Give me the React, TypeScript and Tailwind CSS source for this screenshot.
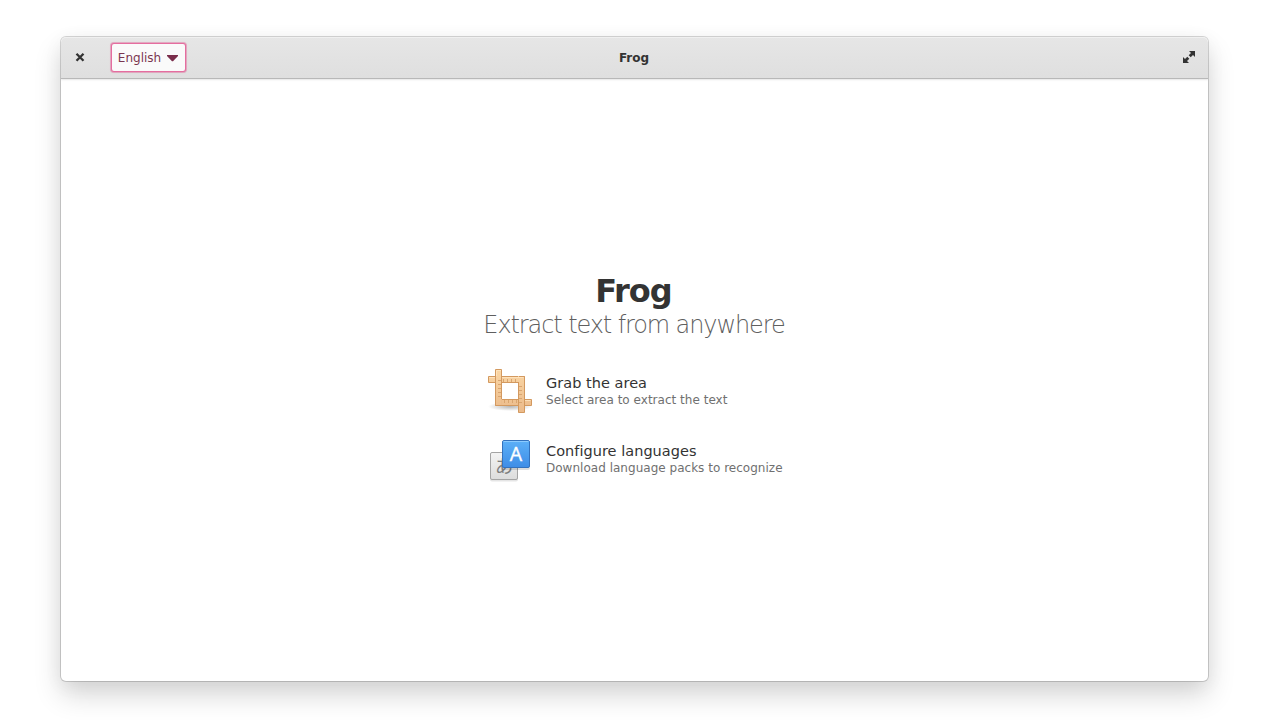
import type { ReactNode } from "react";

function CloseIcon() {
  return (
    <svg width="16" height="16" viewBox="0 0 16 16" fill="none">
      <path d="M4.500 3.700l7 7M11.500 3.700l-7 7" stroke="#333" strokeWidth="2.3" />
    </svg>
  );
}

function ExpandIcon() {
  return (
    <svg width="16" height="16" viewBox="0 0 16 16" fill="#333">
      <path d="M8 1H14V7L12 5L9.700 7.300L7.700 5.300L10 3Z" />
      <path d="M8 13H2V7L4 9L6.300 6.700L8.300 8.700L6 11Z" />
    </svg>
  );
}

function CropIcon() {
  return (
    <svg width="48" height="48" viewBox="0 0 48 48" fill="none" className="shrink-0">
      <defs>
        <linearGradient id="wood" x1="0" y1="2" x2="0" y2="46" gradientUnits="userSpaceOnUse">
          <stop offset="0" stopColor="#fbd7a5" />
          <stop offset="1" stopColor="#ebba8a" />
        </linearGradient>
        <radialGradient id="ground">
          <stop offset="0" stopColor="#000" stopOpacity=".28" />
          <stop offset="1" stopColor="#000" stopOpacity="0" />
        </radialGradient>
      </defs>
      <ellipse cx="24" cy="39.500" rx="22" ry="4.500" fill="url(#ground)" />
      <path d="M16 16h16v16H16z" fill="#fff" />
      <g fill="url(#wood)" stroke="#d3995f">
        <path d="M2.500 9.500h36v6h-36z" />
        <path d="M9.500 32.500h36v6h-36z" />
        <path d="M9.500 2.500h6v36h-6z" />
        <path d="M32.500 9.500h6v36h-6z" />
      </g>
      <path d="M15 32.500h1M15.500 33v5" stroke="#ecbd8d" />
      <path d="M33 9.500h-1M32.500 10v5" stroke="#f7cf9e" />
      <path d="M10.500 9V3.500H15M3 10.500h6M16 10.500h21.500M39 33.500h5.500" stroke="#ffe6c2" strokeOpacity=".8" />
      <path
        d="M12 13.500h3M12 17.500h3M12 21.500h3M12 25.500h3M12 29.500h3M17.500 12v3M21.500 12v3M25.500 12v3M29.500 12v3M33 19.500h3M33 23.500h3M33 27.500h3M33 31.500h3M33 35.500h3M18.500 33v3M22.500 33v3M26.500 33v3M30.500 33v3"
        stroke="#d9a570"
      />
    </svg>
  );
}

function LanguageIcon() {
  return (
    <svg width="48" height="48" viewBox="0 0 48 48" className="shrink-0">
      <defs>
        <linearGradient id="blue" x1="0" y1="0" x2="0" y2="1">
          <stop offset="0" stopColor="#5cb0f8" />
          <stop offset="1" stopColor="#3f8de6" />
        </linearGradient>
        <linearGradient id="grey" x1="0" y1="0" x2="0" y2="1">
          <stop offset="0" stopColor="#f4f4f4" />
          <stop offset="1" stopColor="#dcdcdc" />
        </linearGradient>
      </defs>
      <rect x="4" y="17.500" width="28" height="28" rx="2" fill="#000" opacity=".1" />
      <rect x="4.500" y="16.500" width="27" height="27" rx="1.500" fill="url(#grey)" stroke="#a4a4a4" />
      <text x="18" y="37" textAnchor="middle" fontFamily="Noto Sans CJK JP, sans-serif" fontSize="18" fill="#7e7e7e">あ</text>
      <rect x="16" y="5" width="28" height="29" rx="2" fill="#000" opacity=".13" />
      <rect x="16.500" y="4.500" width="27" height="27" rx="1.500" fill="url(#blue)" stroke="#3472bd" />
      <path d="M17.500 5.500h25" stroke="#8ccbff" />
      <text x="30" y="25" textAnchor="middle" fontFamily="Open Sans, sans-serif" fontSize="19.500" fill="#fff" stroke="#fff" strokeWidth=".4">A</text>
    </svg>
  );
}

function Action({ icon, title, detail }: { icon: ReactNode; title: string; detail: string }) {
  return (
    <button className="flex h-[48px] items-center gap-3 text-left">
      {icon}
      <span className="flex flex-col whitespace-nowrap">
        <span className="text-[14.500px] leading-[17px] tracking-[0.03px] text-[#333]">{title}</span>
        <span className="text-[12px] leading-[16px] tracking-[0.02px] text-[#707070]">{detail}</span>
      </span>
    </button>
  );
}

export default function App() {
  return (
    <div className="h-[720px] w-[1280px] overflow-hidden bg-white pt-[37px] pl-[61px] font-['DejaVu_Sans',sans-serif]">
      <div className="flex h-[644px] w-[1147px] flex-col overflow-hidden rounded-[5px] bg-white shadow-[0_0_0_1px_rgba(0,0,0,0.16),0_14px_28px_rgba(0,0,0,0.16),0_4px_20px_rgba(0,0,0,0.05)]">
        <header className="z-10 grid h-[42px] shrink-0 grid-cols-[1fr_auto_1fr] items-center rounded-t-[5px] border-b border-[#b8b8b8] bg-linear-to-b from-[#e6e6e6] to-[#dfdfdf] pr-[11px] pl-[11px] shadow-[inset_0_1px_0_#f0f0f0,0_1px_2px_rgba(0,0,0,0.1)]">
          <div className="flex items-center">
            <button aria-label="Close"><CloseIcon /></button>
            <button className="ml-[23px] flex h-[29px] w-[75px] items-center justify-center gap-[6px] rounded-[3px] border border-[#de3e80]/75 bg-[#fafafa] pr-px text-[12px] text-[#7a3650] shadow-[0_0_0_1px_rgba(222,62,128,0.25),0_0_1px_1px_rgba(222,62,128,0.15)]">
              English
              <svg width="11" height="8" viewBox="0 0 11 8" fill="#7a2d4b"><path d="M0 1h11v1L6 7.300H5L0 2z" /></svg>
            </button>
          </div>
          <h1 className="pr-px text-[12px] font-bold text-[#333]">Frog</h1>
          <button aria-label="Maximize" className="justify-self-end"><ExpandIcon /></button>
        </header>
        <main className="flex grow flex-col items-center pt-[193px]">
          <h2 className="pr-[2px] text-[32px] leading-[38px] font-bold tracking-[-1px] text-[#333]">Frog</h2>
          <p className="mt-px pr-px text-[24px] leading-[29px] font-extralight tracking-[-1.100px] whitespace-nowrap text-[#5f5f5f]">Extract text from anywhere</p>
          <div className="mt-[27px] flex w-[297px] flex-col">
            <Action icon={<CropIcon />} title="Grab the area" detail="Select area to extract the text" />
            <div className="mt-[21px] [&_span.flex]:-mt-0.5">
              <Action icon={<LanguageIcon />} title="Configure languages" detail="Download language packs to recognize" />
            </div>
          </div>
        </main>
      </div>
    </div>
  );
}
